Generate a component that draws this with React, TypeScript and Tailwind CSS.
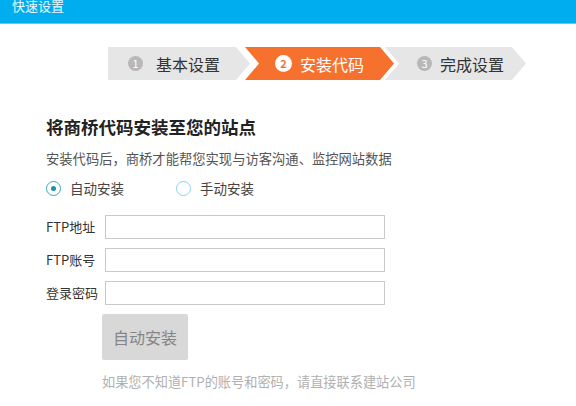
const font = { fontFamily: '"Noto Sans CJK SC", "Noto Sans", sans-serif' };

function Step({
  num,
  label,
  active,
  first,
  className,
}: {
  num: number;
  label: string;
  active?: boolean;
  first?: boolean;
  className: string;
}) {
  return (
    <div
      className={`flex h-[33px] items-center ${className} ${
        active ? 'bg-[#f7712e] text-white' : 'bg-[#e6e6e6] text-[#333]'
      }`}
    >
      <span
        className={`flex items-center justify-center rounded-full text-[11px] leading-none ${
          active
            ? 'h-[17px] w-[17px] bg-white font-bold text-[#f7712e]'
            : 'h-[15px] w-[15px] bg-[#b8b8b8] text-white'
        }`}
      >
        {num}
      </span>
      <span className={`text-[16px] leading-[20px] ${first ? 'ml-[13px]' : 'ml-[8px]'}`}>{label}</span>
    </div>
  );
}

function Radio({ checked, label }: { checked?: boolean; label: string }) {
  return (
    <div className="flex items-center">
      <span
        className={`flex h-[15px] w-[15px] items-center justify-center rounded-full border-[1.5px] ${
          checked ? 'border-[#3aa9c4]' : 'border-[#8fd3e8]'
        }`}
      >
        {checked && <span className="h-[5px] w-[5px] rounded-full bg-[#1e8fa8]" />}
      </span>
      <span className="ml-[9px] text-[13.5px] leading-[16px] text-[#444]">{label}</span>
    </div>
  );
}

function Field({ label }: { label: string }) {
  return (
    <div className="flex h-[24px] items-center">
      <span className="w-[59px] text-[13px] leading-[16px] text-[#333]">{label}</span>
      <div className="h-[24px] w-[280px] border border-[#c9c9c9] bg-white" />
    </div>
  );
}

export default function App() {
  return (
    <div className="h-[406px] w-[576px] overflow-hidden bg-white" style={font}>
      {/* Header */}
      <div className="h-[24px] overflow-hidden border-b border-[#62ccf2] bg-[#00aeef] pl-[12px]">
        <div className="-mt-[1px] text-[13px] leading-[14px] text-[#e8f7fd]">快速设置</div>
      </div>

      {/* Steps */}
      <div className="mt-[23px] flex pl-[108px]">
        <Step
          num={1}
          label="基本设置"
          first
          className="w-[142px] pl-[20px] [clip-path:polygon(0_0,128px_0,142px_50%,128px_100%,0_100%)]"
        />
        <Step
          num={2}
          label="安装代码"
          active
          className="-ml-[5px] w-[149px] pl-[30px] [clip-path:polygon(0_0,135px_0,149px_50%,135px_100%,0_100%,14px_50%)]"
        />
        <Step
          num={3}
          label="完成设置"
          className="-ml-[9px] w-[141px] pl-[32px] [clip-path:polygon(0_0,127px_0,141px_50%,127px_100%,0_100%,14px_50%)]"
        />
      </div>

      {/* Content */}
      <div className="flex flex-col pl-[46px]">
        <h1 className="mt-[37px] text-[17.5px] font-bold leading-[20px] text-[#222]">
          将商桥代码安装至您的站点
        </h1>
        <p className="mt-[14px] text-[13.3px] leading-[16px] text-[#555]">
          安装代码后，商桥才能帮您实现与访客沟通、监控网站数据
        </p>
        <div className="mt-[13px] flex gap-[52px]">
          <Radio checked label="自动安装" />
          <Radio label="手动安装" />
        </div>

        <div className="mt-[19px] flex flex-col gap-[9px]">
          <Field label="FTP地址" />
          <Field label="FTP账号" />
          <Field label="登录密码" />
        </div>

        <div className="ml-[56px] mt-[9px] flex h-[46px] w-[86px] items-center justify-center rounded-[2px] bg-[#d8d8d8] text-[16px] text-[#858585]">
          自动安装
        </div>

        <p className="ml-[56px] mt-[13px] text-[13.2px] leading-[18px] text-[#b0b0b0]">
          如果您不知道FTP的账号和密码，请直接联系建站公司
        </p>
      </div>
    </div>
  );
}
